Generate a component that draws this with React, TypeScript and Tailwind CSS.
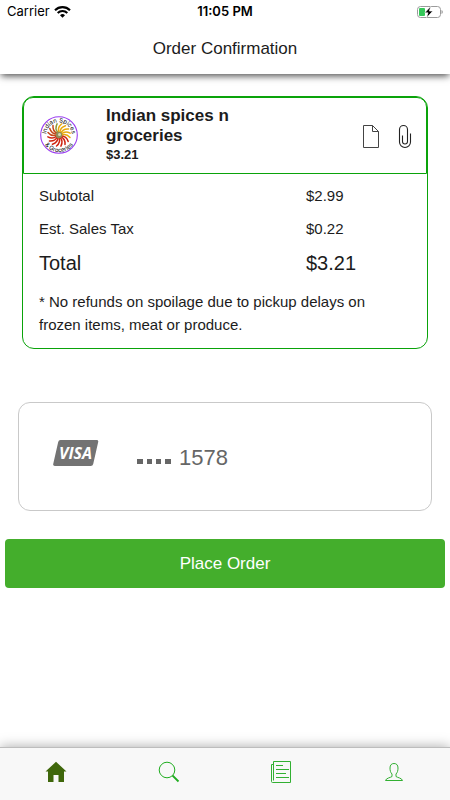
interface SummaryLine {
  label: string
  amount: string
  total?: boolean
}

const lines: SummaryLine[] = [
  { label: 'Subtotal', amount: '$2.99' },
  { label: 'Est. Sales Tax', amount: '$0.22' },
  { label: 'Total', amount: '$3.21', total: true },
]

const petals = Array.from({ length: 16 }, (_, i) => i * 22.5)

function petalColor(angle: number) {
  if (angle < 100) return '#e8a90c'
  if (angle < 270) return '#cf2410'
  if (angle < 320) return '#c4481a'
  return '#8f9a3a'
}

function StatusBar() {
  return (
    <div className="grid h-6 grid-cols-3 items-center px-[7px] font-[Inter,sans-serif] text-[13px] text-black">
      <div className="flex items-center gap-1">
        <span>Carrier</span>
        <svg viewBox="0 0 17 12" className="h-3 w-[17px]" fill="none" stroke="#000" strokeWidth="2.1" aria-hidden="true">
          <path d="M1 4.2a10.6 10.6 0 0 1 15 0" />
          <path d="M3.7 7a6.8 6.8 0 0 1 9.6 0" />
          <path d="M6 9.2a3.5 3.5 0 0 1 5 0L8.5 11.7z" fill="#000" stroke="none" />
        </svg>
      </div>
      <span className="text-center font-semibold">11:05 PM</span>
      <svg viewBox="0 0 26 12" className="h-3 w-[26px] justify-self-end" aria-label="Battery charging">
        <rect x="0.5" y="0.5" width="23" height="11" rx="3" fill="none" stroke="#9b9b9b" />
        <path d="M24.6 4v4c1.4-.6 1.4-3.4 0-4z" fill="#777" />
        <rect x="2" y="2" width="6" height="8" rx="1" fill="#34c759" />
        <path d="M13.8.3 7.8 6.8h3.2L9.6 11.7l6.2-6.6h-3.4z" fill="#000" stroke="#fff" strokeWidth="0.6" />
      </svg>
    </div>
  )
}

function StoreLogo() {
  return (
    <svg viewBox="0 0 38 38" className="h-[38px] w-[38px] shrink-0" role="img">
      <defs>
        <path id="logo-top" d="M9.9 28.1a12.8 12.8 0 1 1 18.2 0" />
        <path id="logo-bottom" d="M1.8 19a17.2 17.2 0 0 0 34.4 0" />
      </defs>
      <circle cx="19" cy="19" r="18.3" fill="#fff" stroke="#9a3df0" strokeWidth="1.1" />
      {petals.map((angle) => (
        <path
          key={angle}
          d="M19 16.5C17.8 13.5 18.5 10.5 21.5 8"
          fill="none"
          stroke={petalColor(angle)}
          strokeWidth="1.5"
          strokeLinecap="round"
          transform={`rotate(${angle} 19 19)`}
        />
      ))}
      <circle cx="19" cy="19" r="3.2" fill="#8f8c58" />
      <circle cx="19.5" cy="18.5" r="1.5" fill="#d8d8b8" />
      <text fontSize="6" fill="#000" fontFamily="Inter, sans-serif" textAnchor="middle">
        <textPath href="#logo-top" startOffset="50%">Indian Spices</textPath>
      </text>
      <text fontSize="6" fill="#000" fontFamily="Inter, sans-serif" textAnchor="middle">
        <textPath href="#logo-bottom" startOffset="50%">&amp; Groceries</textPath>
      </text>
    </svg>
  )
}

function StoreHeader() {
  return (
    <div className="flex h-[77px] items-center rounded-t-[10px] border border-[#0aa30a] pr-[14px] pb-0.5 pl-4">
      <StoreLogo />
      <div className="ml-7 w-40 text-[#1c1c1c]">
        <h2 className="text-[17px] leading-5 font-bold">Indian spices n groceries</h2>
        <p className="text-[13px] leading-[18px] font-bold">$3.21</p>
      </div>
      <div className="ml-auto flex items-center gap-[18px] pt-1">
        <button type="button" aria-label="View receipt">
          <svg viewBox="0 0 18 25" className="h-[25px] w-[18px]" fill="none" stroke="#444">
            <path d="M1.5 1.5h9l6 6v16h-15z" />
            <path d="M10.5 1.5v6h6" />
          </svg>
        </button>
        <button type="button" aria-label="Attach file">
          <svg viewBox="0 0 14 25" className="h-[25px] w-[14px]" fill="none" stroke="#222" strokeWidth="1.1">
            <path d="M9.5 17.5v-12a4 4 0 0 0-8 0V18a5.500 5.500 0 0 0 11 0V9.500M9.500 17.500a2.500 2.500 0 0 1-5 0v-6" />
          </svg>
        </button>
      </div>
    </div>
  )
}

function VisaLogo() {
  return (
    <svg viewBox="0 0 46 26" className="h-[26px] w-[46px]" role="img">
      <path d="M7.5 0h36q2.2 0 1.7 2l-5 22q-.4 2-2.5 2H1.8Q-.2 26 .2 24l5-22Q5.6 0 7.5 0z" fill="#737373" />
      <text
        x="22.5"
        y="19"
        fill="#fff"
        fontSize="16"
        fontWeight="700"
        fontStyle="italic"
        fontFamily="'Open Sans', sans-serif"
        textAnchor="middle"
      >
        VISA
      </text>
    </svg>
  )
}

function TabBar() {
  return (
    <nav className="grid h-[53px] grid-cols-4 items-center justify-items-center border-t border-[#bdbdbd] bg-[#f8f8f8] pb-1 shadow-[0_0_12px_rgba(0,0,0,0.35)]">
      <a href="#home" aria-label="Home">
        <svg viewBox="0 0 22 22" className="h-[22px] w-[22px]">
          <path d="M11 .8.5 10.5H3V21h5.5v-7h5v7H19V10.5h2.5z" fill="#3f670b" />
        </svg>
      </a>
      <a href="#search" aria-label="Search">
        <svg viewBox="0 0 22 22" className="h-[22px] w-[22px]" fill="none" stroke="#20ad20">
          <circle cx="9" cy="9" r="7.8" />
          <path d="m14.5 14.5 6 6" strokeWidth="1.8" />
        </svg>
      </a>
      <a href="#orders" aria-label="Orders">
        <svg viewBox="0 0 22 24" className="h-6 w-[22px]" fill="none" stroke="#32b032">
          <path d="M3.5 20.5v-19h17v21h-18a1 1 0 0 1-1-1v-17h2" />
          <path d="M6 5.5h7M6 9.5h13M6 13.5h10M6 17.5h13" />
        </svg>
      </a>
      <a href="#account" aria-label="Account">
        <svg viewBox="0 0 20 20" className="h-5 w-5" fill="none" stroke="#32b032">
          <path d="M8 14.5V12C6.5 10.500 6 8.500 6 6c0-3 1.500-4.500 4-4.500S14 3 14 6c0 2.500-.5 4.500-2 6v2.500c1 1 6 1.500 6.500 4h-17c.5-2.500 5.500-3 6.500-4z" />
        </svg>
      </a>
    </nav>
  )
}

export default function App() {
  return (
    <div className="flex min-h-screen flex-col bg-white font-['Liberation_Sans',sans-serif] text-[#1c1c1c]">
      <header className="bg-white shadow-[0_3px_7px_-1px_rgba(0,0,0,0.7)]">
        <StatusBar />
        <h1 className="flex h-[50px] items-center justify-center text-[17px]">Order Confirmation</h1>
      </header>

      <main className="flex-1">
        <section className="mx-[22px] mt-[22px] rounded-xl border border-[#0aa30a]">
          <StoreHeader />
          <div className="px-4 pt-1.5 pb-3">
            <dl>
              {lines.map((line) => (
                <div
                  key={line.label}
                  className={
                    line.total
                      ? 'flex h-[34px] items-center text-[20px]'
                      : 'flex h-[33px] items-center text-[15px]'
                  }
                >
                  <dt className="flex-1">{line.label}</dt>
                  <dd className="w-[105px]">{line.amount}</dd>
                </div>
              ))}
            </dl>
            <p className="mt-2.5 pr-8 text-[15px] leading-[23px]">
              * No refunds on spoilage due to pickup delays on frozen items, meat or produce.
            </p>
          </div>
        </section>

        <section className="mx-[18px] mt-[53px] flex h-[109px] items-center rounded-xl border border-[#c9c9c9] pl-[34px] text-[#666]">
          <div className="pb-2">
            <VisaLogo />
          </div>
          <div className="ml-[38px] flex items-center gap-2 pt-0.5 text-[22px]">
            <span className="flex gap-1 pt-2" aria-hidden="true">
              <span className="h-[5px] w-[6px] bg-[#666]" />
              <span className="h-[5px] w-[5px] bg-[#666]" />
              <span className="h-[5px] w-[5px] bg-[#666]" />
              <span className="h-[5px] w-[6px] bg-[#666]" />
            </span>
            <span>1578</span>
          </div>
        </section>

        <div className="mt-7 px-[5px]">
          <button type="button" className="h-[49px] w-full rounded-sm bg-[#44ae2c] text-[17px] text-white">
            Place Order
          </button>
        </div>
      </main>

      <TabBar />
    </div>
  )
}
